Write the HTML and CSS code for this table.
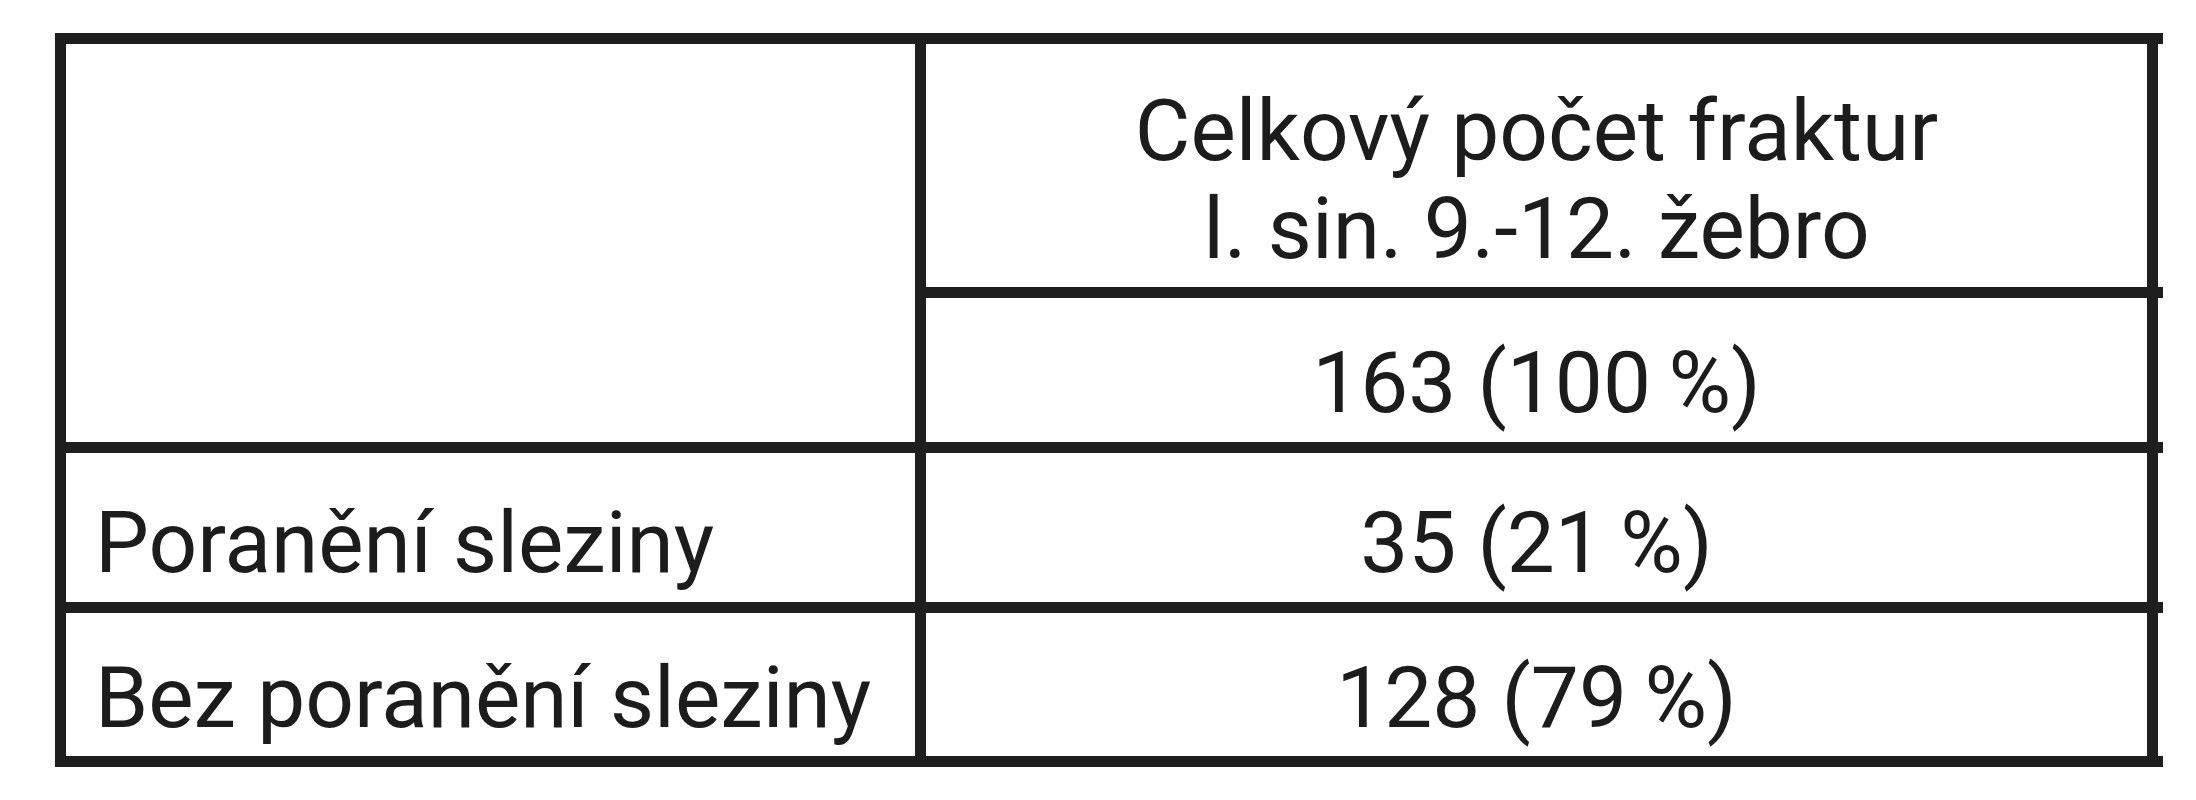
FILE: index.html
```html
<!DOCTYPE html>
<html lang="cs">
<head>
<meta charset="utf-8">
<title>Fraktury žeber a poranění sleziny</title>
<link rel="stylesheet" href="styles.css">
</head>
<body>
<div class="table">
  <div class="cell corner"></div>
  <div class="cell head"><span>Celkový počet fraktur</span><span>l. sin. 9.-12. žebro</span></div>
  <div class="ext"></div>
  <div class="cell num row2">163 (100&#8201;%)</div>
  <div class="ext"></div>
  <div class="cell label row3">Poranění sleziny</div>
  <div class="cell num row3">35 (21&#8201;%)</div>
  <div class="ext"></div>
  <div class="cell label row4">Bez poranění sleziny</div>
  <div class="cell num row4">128 (79&#8201;%)</div>
  <div class="ext"></div>
</div>
</body>
</html>
```
FILE: styles.css
```css
html, body {
  margin: 0;
  padding: 0;
  background: #ffffff;
}

body {
  font-family: Roboto, "Liberation Sans", sans-serif;
  color: #1c1c1c;
}

.table {
  margin: 33px 0 0 55px;
  width: 2108px;
  box-sizing: border-box;
  border-top: 11px solid #1e1e1e;
  border-left: 11px solid #1e1e1e;
  display: grid;
  grid-template-columns: 860px 1232px 5px;
  grid-template-rows: 254px 155px 160px 154px;
}

.cell {
  box-sizing: border-box;
  border-right: 11px solid #1e1e1e;
  border-bottom: 11px solid #1e1e1e;
  font-size: 85.5px;
  line-height: 98px;
  white-space: nowrap;
}

.ext {
  box-sizing: border-box;
  border-bottom: 11px solid #1e1e1e;
}

.corner {
  grid-row: 1 / 3;
  grid-column: 1;
}

.head {
  display: flex;
  flex-direction: column;
  align-items: center;
  padding-top: 38px;
}

.num {
  text-align: center;
}

.label {
  padding-left: 29px;
}

.row2 { padding-top: 36px; }
.row3 { padding-top: 41px; }
.row4 { padding-top: 36px; }
```
